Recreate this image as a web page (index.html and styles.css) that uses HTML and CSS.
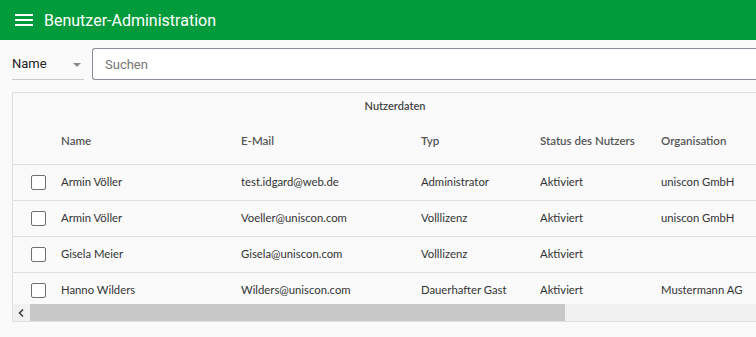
FILE: index.html
```html
<!DOCTYPE html>
<html lang="de">
<head>
<meta charset="utf-8">
<title>Benutzer-Administration</title>
<link rel="stylesheet" href="styles.css">
</head>
<body>
<header class="topbar">
  <svg class="menu-icon" width="18" height="12" viewBox="0 0 18 12">
    <rect x="0" y="0" width="18" height="2" fill="#fff"/>
    <rect x="0" y="5" width="18" height="2" fill="#fff"/>
    <rect x="0" y="10" width="18" height="2" fill="#fff"/>
  </svg>
  <h1 class="title">Benutzer-Administration</h1>
</header>

<div class="toolbar">
  <div class="select">
    <span class="select-label">Name</span>
    <span class="select-arrow"></span>
  </div>
  <div class="search">Suchen</div>
</div>

<div class="card">
  <div class="viewport">
    <div class="group-row">Nutzerdaten</div>
    <div class="row head">
      <div class="cell check"></div>
      <div class="cell">Name</div>
      <div class="cell">E-Mail</div>
      <div class="cell">Typ</div>
      <div class="cell">Status des Nutzers</div>
      <div class="cell">Organisation</div>
    </div>
    <div class="row">
      <div class="cell check"><span class="box"></span></div>
      <div class="cell">Armin Völler</div>
      <div class="cell">test.idgard@web.de</div>
      <div class="cell">Administrator</div>
      <div class="cell">Aktiviert</div>
      <div class="cell">uniscon GmbH</div>
    </div>
    <div class="row">
      <div class="cell check"><span class="box"></span></div>
      <div class="cell">Armin Völler</div>
      <div class="cell">Voeller@uniscon.com</div>
      <div class="cell">Volllizenz</div>
      <div class="cell">Aktiviert</div>
      <div class="cell">uniscon GmbH</div>
    </div>
    <div class="row">
      <div class="cell check"><span class="box"></span></div>
      <div class="cell">Gisela Meier</div>
      <div class="cell">Gisela@uniscon.com</div>
      <div class="cell">Volllizenz</div>
      <div class="cell">Aktiviert</div>
      <div class="cell"></div>
    </div>
    <div class="row">
      <div class="cell check"><span class="box"></span></div>
      <div class="cell">Hanno Wilders</div>
      <div class="cell">Wilders@uniscon.com</div>
      <div class="cell">Dauerhafter Gast</div>
      <div class="cell">Aktiviert</div>
      <div class="cell">Mustermann AG</div>
    </div>
  </div>
  <div class="scrollbar">
    <div class="scroll-btn">
      <svg width="7" height="8" viewBox="0 0 7 8"><path d="M5 0.5 L1.5 4 L5 7.5" fill="none" stroke="#444" stroke-width="1.6"/></svg>
    </div>
    <div class="scroll-thumb"></div>
    <div class="scroll-track"></div>
  </div>
</div>
</body>
</html>
```

FILE: styles.css
```css
html, body {
  margin: 0;
  padding: 0;
}
body {
  width: 756px;
  height: 337px;
  overflow: hidden;
  background: #fafafa;
  font-family: "Lato", "Roboto", sans-serif;
}

.topbar {
  height: 40px;
  background: #029b3c;
  display: flex;
  align-items: center;
  padding-left: 15px;
  gap: 11px;
  box-sizing: border-box;
}
.menu-icon {
  display: block;
  flex: none;
}
.title {
  margin: 0;
  font-family: "Roboto", sans-serif;
  font-weight: 400;
  font-size: 16px;
  color: #ffffff;
}

.toolbar {
  display: flex;
  align-items: flex-start;
  padding: 8px 0 0 12px;
  gap: 8px;
  width: 900px;
}
.select {
  width: 72px;
  height: 31px;
  border-bottom: 1px solid #c9c9c9;
  display: flex;
  align-items: center;
  justify-content: space-between;
  font-family: "Roboto", sans-serif;
  font-size: 13px;
  color: #222;
  flex: none;
}
.select-arrow {
  width: 0;
  height: 0;
  border-left: 4px solid transparent;
  border-right: 4px solid transparent;
  border-top: 4px solid #8a8a8a;
  margin-right: 3px;
  margin-top: 2px;
}
.search {
  flex: 1;
  height: 30px;
  border: 1px solid #8f8c9b;
  border-right: none;
  border-radius: 3px 0 0 3px;
  background: #ffffff;
  display: flex;
  align-items: center;
  padding-left: 12px;
  font-family: "Roboto", sans-serif;
  font-size: 13px;
  color: #757575;
}

.card {
  margin: 12px 0 0 12px;
  width: 766px;
  border: 1px solid #e0e0e0;
  background: #fafafa;
  box-sizing: border-box;
}
.viewport {
  height: 211px;
  overflow: hidden;
}
.group-row {
  height: 24px;
  padding-bottom: 2px;
  display: flex;
  align-items: center;
  justify-content: center;
  font-size: 11px;
  font-weight: 600;
  color: #444;
}
.row {
  display: grid;
  grid-template-columns: 48px 180px 180px 119px 121px 1fr;
  height: 33px;
  padding-bottom: 2px;
  border-top: 1px solid #e0e0e0;
  align-items: center;
  font-size: 11.3px;
  color: #333;
}
.row.head {
  height: 43px;
  border-top: none;
  font-weight: 600;
  font-size: 11.5px;
  color: #555;
}
.cell {
  white-space: nowrap;
}
.check {
  display: flex;
  align-items: center;
  padding-left: 18px;
  margin-top: 2px;
}
.box {
  width: 13px;
  height: 13px;
  border: 1px solid #707070;
  border-radius: 2px;
  background: #fff;
}

.scrollbar {
  display: flex;
  height: 17px;
}
.scroll-btn {
  width: 17px;
  background: #f1f1f1;
  display: flex;
  align-items: center;
  justify-content: center;
}
.scroll-thumb {
  width: 535px;
  background: #c8c8c8;
}
.scroll-track {
  flex: 1;
  background: #f1f1f1;
}
```
